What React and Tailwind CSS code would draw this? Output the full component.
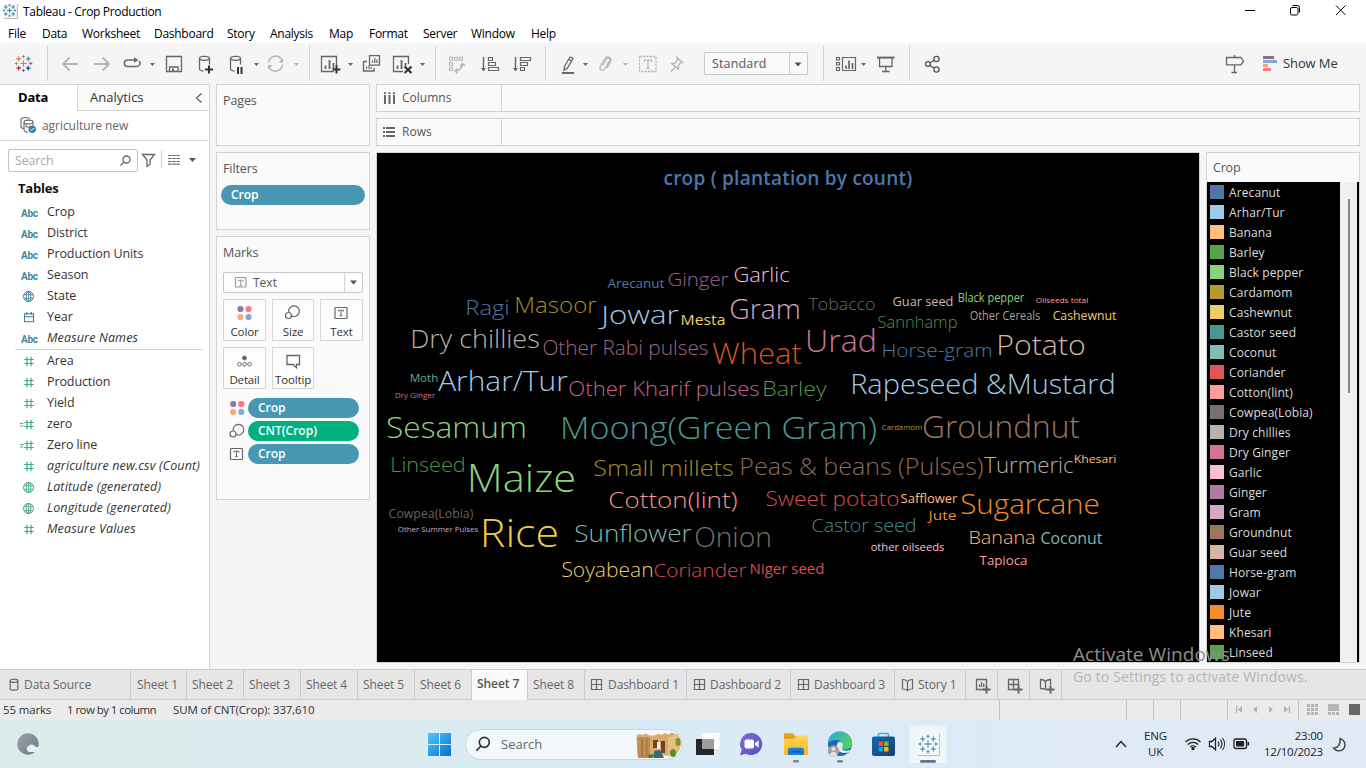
import React from "react";

/* Drawing whose viewBox starts at (x, y), so paths share one coordinate space. */
function I({ x, y, w, h, c = "#666", sw = 1.3, className = "", children }) {
  return (
    <svg
      width={w}
      height={h}
      viewBox={`${x} ${y} ${w} ${h}`}
      fill="none"
      stroke={c}
      strokeWidth={sw}
      className={"shrink-0 " + className}
    >
      {children}
    </svg>
  );
}

const Caret = ({ x, y = 64.5, c = "#666" }) => (
  <path d={`M${x - 2.5} ${y - 1.5}h5l-2.5 3z`} fill={c} stroke="none" />
);

const plus = (x, y, s) => `M${x - s} ${y}h${s * 2}M${x} ${y - s}v${s * 2}`;

function TableauMark({ cx, cy, s = 1, mono, sw = 1.2 }) {
  const col = (c) => (mono ? mono : c);
  return (
    <g transform={`translate(${cx} ${cy}) scale(${s})`} fill="none" strokeWidth={sw}>
      <path d={plus(0, 0, 3.2)} stroke={col("#e8762d")} />
      <path d={plus(-4.8, -4.6, 2.3)} stroke={col("#e8762d")} />
      <path d={plus(4.8, -4.6, 2.3)} stroke={col("#5b879b")} />
      <path d={plus(-4.8, 4.6, 2.3)} stroke={col("#c72035")} />
      <path d={plus(4.8, 4.6, 2.3)} stroke={col("#1f457e")} />
      <path d={plus(0, -7, 1.6)} stroke={col("#7099a5")} strokeWidth={sw * 0.8} />
      <path d={plus(0, 7, 1.6)} stroke={col("#5b6591")} strokeWidth={sw * 0.8} />
      <path d={plus(-7.2, 0, 1.6)} stroke={col("#7099a5")} strokeWidth={sw * 0.8} />
      <path d={plus(7.2, 0, 1.6)} stroke={col("#5b6591")} strokeWidth={sw * 0.8} />
    </g>
  );
}

const TBox = ({ x, y, w = 12, h = 11, c = "#666" }) => (
  <g stroke={c}>
    <rect x={x} y={y} width={w} height={h} rx="0.8" strokeWidth="1.2" />
    <path
      d={`M${x + w / 2 - 2.5} ${y + 4}v-1.2h5v1.2M${x + w / 2} ${y + 3}v5.2m-1.3 0h2.6`}
      strokeWidth="1"
    />
  </g>
);

const Dots = ({ x, y }) => (
  <g stroke="none">
    <circle cx={x} cy={y} r="3.1" fill="#8f78a5" />
    <circle cx={x + 8} cy={y} r="3.1" fill="#fc7885" />
    <circle cx={x} cy={y + 8} r="3.1" fill="#f6a97c" />
    <circle cx={x + 8} cy={y + 8} r="3.1" fill="#87a9ce" />
  </g>
);

const Bubble = ({ x, y }) => (
  <g strokeWidth="1.2">
    <path d={`M${x + 4.3} ${y + 6.6}a5.300 5.300 0 1 1 3 3.900`} />
    <circle cx={x + 4} cy={y + 10} r="3" />
  </g>
);

const Globe = ({ c }) => (
  <g stroke={c} strokeWidth="1">
    <circle cx="28.5" cy="10.5" r="5" />
    <ellipse cx="28.5" cy="10.5" rx="2.3" ry="5" />
    <path d="M24 8.7h9M24 12.3h9M28.5 5.5v10" strokeWidth="0.8" />
  </g>
);

function Field({ kind, label, italic }) {
  const blue = "#3a81a0";
  const green = "#45a884";
  return (
    <div className="flex h-[21px] items-center">
      {kind === "abc" ? (
        <span className="w-[47px] pt-px pl-[21px] font-[Roboto] text-[10px] font-bold tracking-[-0.3px] text-[#3f86a1]">
          Abc
        </span>
      ) : (
        <I x={0} y={0} w={47} h={21} className="">
          {kind === "geo" && <Globe c={blue} />}
          {kind === "ggeo" && <Globe c={green} />}
          {kind === "date" && (
            <path d="M24.5 6.8h9v8h-9zM24.5 9.7h9M26.7 5v3M31.3 5v3" stroke={blue} strokeWidth="1.1" />
          )}
          {(kind === "num" || kind === "calc") && (
            <path d="M24.3 8.5h9.4M24.3 12.5h9.4M27 5.8v9.4M31 5.8v9.4" stroke={green} strokeWidth="1.2" />
          )}
          {kind === "calc" && <path d="M20 9.5h3.3M20 12h3.3" stroke={green} strokeWidth="1" />}
        </I>
      )}
      <span
        className={
          "text-[12.5px] whitespace-nowrap text-[#333] " + (italic ? "italic tracking-[0.150px]" : "tracking-[-0.1px]")
        }
      >
        {label}
      </span>
    </div>
  );
}

const dims = [
  ["abc", "Crop"],
  ["abc", "District"],
  ["abc", "Production Units"],
  ["abc", "Season"],
  ["geo", "State"],
  ["date", "Year"],
  ["abc", "Measure Names", 1],
];
const measures = [
  ["num", "Area"],
  ["num", "Production"],
  ["num", "Yield"],
  ["calc", "zero"],
  ["calc", "Zero line"],
  ["num", "agriculture new.csv (Count)", 1],
  ["ggeo", "Latitude (generated)", 1],
  ["ggeo", "Longitude (generated)", 1],
  ["num", "Measure Values", 1],
];

/* label, left, baseline, width, size, colour */
const words = [
  ["Arecanut", 608, 288, 56, 13, "#4e79a7"],
  ["Ginger", 668, 285.5, 60, 19, "#a0648f"],
  ["Garlic", 734, 281.5, 55, 19.5, "#fabfd2"],
  ["Ragi", 466, 314.5, 43, 21, "#4e79a7"],
  ["Masoor", 515, 312.5, 81, 22, "#a58a2a"],
  ["Jowar", 602, 324, 76, 26, "#a0cbe8"],
  ["Mesta", 681, 325, 44, 15, "#f1ce63"],
  ["Gram", 730, 319, 70, 27.5, "#d4a6c8"],
  ["Tobacco", 809, 310, 66, 17, "#6f6866"],
  ["Guar seed", 893, 306, 60, 13, "#d7b5a6"],
  ["Black pepper", 958, 302.3, 66, 12, "#8cd17d"],
  ["Oilseeds total", 1036, 303, 52, 8, "#ff9d9a"],
  ["Sannhamp", 878, 328, 79, 16.5, "#4f9545"],
  ["Other Cereals", 970, 320, 70, 12, "#a8a09c"],
  ["Cashewnut", 1053, 320, 63, 12.5, "#f1ce63"],
  ["Dry chillies", 411, 348, 128, 25.5, "#bab0ac"],
  ["Other Rabi pulses", 543, 355, 165, 19.5, "#a0648f"],
  ["Wheat", 713, 364, 88, 29, "#d65420"],
  ["Urad", 806, 352, 70, 32, "#d37295"],
  ["Horse-gram", 882, 357, 110, 19, "#4e79a7"],
  ["Potato", 997, 355, 88, 28, "#d7b5a6"],
  ["Moth", 410, 382, 28, 11, "#6fa9a0"],
  ["Dry Ginger", 395, 398, 40, 8, "#d37295"],
  ["Arhar/Tur", 439, 391, 128, 28, "#a0cbe8"],
  ["Other Kharif pulses", 569, 396, 190, 20.5, "#c4658a"],
  ["Barley", 763, 396, 63, 20.5, "#519a48"],
  ["Rapeseed &Mustard", 851, 394, 264, 28, "#a0cbe8"],
  ["Sesamum", 387, 438, 139, 30, "#8cd17d"],
  ["Moong(Green Gram)", 561, 439, 315, 32, "#499894"],
  ["Cardamom", 882, 430, 40, 8, "#b6992d"],
  ["Groundnut", 923, 438, 156, 30.5, "#9d7660"],
  ["Linseed", 391, 472, 74, 21, "#4f9545"],
  ["Maize", 468, 492, 107, 39, "#8cd17d"],
  ["Small millets", 594, 476, 139, 22, "#a58a2a"],
  ["Peas & beans (Pulses)", 740, 475, 243, 23, "#8f6b58"],
  ["Turmeric", 985, 473.3, 88, 21.5, "#bab0ac"],
  ["Khesari", 1074, 463, 42, 11.5, "#ffbe7d"],
  ["Cotton(lint)", 609, 508, 128, 22, "#f49693"],
  ["Sweet potato", 766, 506, 133, 20, "#d94f53"],
  ["Safflower", 901, 503, 56, 12, "#ffbe7d"],
  ["Sugarcane", 961, 514, 138, 28, "#f28e2b"],
  ["Cowpea(Lobia)", 389, 518, 84, 12, "#68615f"],
  ["Other Summer Pulses", 398, 532, 80, 8, "#d4a6c8"],
  ["Rice", 481, 547, 77, 39, "#edc948"],
  ["Sunflower", 575, 542, 116, 23.5, "#7fb8af"],
  ["Onion", 695, 547, 76, 28, "#79706e"],
  ["Castor seed", 812, 532, 104, 18.5, "#44908c"],
  ["Jute", 929, 520, 27, 13.5, "#f28e2b"],
  ["Banana", 969, 544, 66, 18.5, "#ffbe7d"],
  ["Coconut", 1041, 544, 61, 15.5, "#7fb8af"],
  ["other oilseeds", 871, 551, 73, 11.5, "#fabfd2"],
  ["Tapioca", 980, 565, 47, 13, "#ff9d9a"],
  ["Soyabean", 562, 576.5, 91, 20, "#f1ce63"],
  ["Coriander", 654, 577, 92, 19, "#d94f53"],
  ["Niger seed", 750, 574, 74, 15, "#d94f53"],
];

const legend = [
  ["Arecanut", "#4e79a7"],
  ["Arhar/Tur", "#a0cbe8"],
  ["Banana", "#ffbe7d"],
  ["Barley", "#59a14f"],
  ["Black pepper", "#8cd17d"],
  ["Cardamom", "#b6992d"],
  ["Cashewnut", "#f1ce63"],
  ["Castor seed", "#499894"],
  ["Coconut", "#86bcb6"],
  ["Coriander", "#e15759"],
  ["Cotton(lint)", "#ff9d9a"],
  ["Cowpea(Lobia)", "#79706e"],
  ["Dry chillies", "#bab0ac"],
  ["Dry Ginger", "#d37295"],
  ["Garlic", "#fabfd2"],
  ["Ginger", "#b07aa1"],
  ["Gram", "#d4a6c8"],
  ["Groundnut", "#9d7660"],
  ["Guar seed", "#d7b5a6"],
  ["Horse-gram", "#4e79a7"],
  ["Jowar", "#a0cbe8"],
  ["Jute", "#f28e2b"],
  ["Khesari", "#ffbe7d"],
  ["Linseed", "#59a14f"],
];

function Menu() {
  const items = [
    ["File", "w-[34px]"],
    ["Data", "w-[40px]"],
    ["Worksheet", "w-[72px]"],
    ["Dashboard", "w-[73px]"],
    ["Story", "w-[43px]"],
    ["Analysis", "w-[59px]"],
    ["Map", "w-[40px]"],
    ["Format", "w-[54px]"],
    ["Server", "w-[48px]"],
    ["Window", "w-[60px]"],
    ["Help", "w-[40px]"],
  ];
  return (
    <div className="flex h-[19px] items-center bg-white pl-2 text-[12px] tracking-[-0.270px] text-black">
      {items.map(([t, w]) => (
        <span key={t} className={w}>
          {t}
        </span>
      ))}
    </div>
  );
}

function Toolbar() {
  const g = "#b4b4b4";
  const sep = "h-[35px] w-px shrink-0 bg-[#d4d4d4]";
  return (
    <div className="flex h-[41px] items-center bg-[#f5f5f5]">
      <I x={0} y={43} w={47} h={41}>
        <TableauMark cx={23.5} cy={63.5} />
      </I>
      <div className={sep} />
      <I x={48} y={43} w={261} h={41}>
        <path d="M78 64H63M69.500 57.500L63 64l6.500 6.500" stroke={g} strokeWidth="1.8" />
        <path d="M94 64h15M102.500 57.500L109 64l-6.500 6.500" stroke={g} strokeWidth="1.8" />
        <path d="M132 66.500h4.500a3.700 3.300 0 0 0 2.600-5.500M135 60h-8a3.300 3.300 0 0 0 0 6.500h7" strokeWidth="1.4" />
        <path d="M134 57.300l4.500 2.700-4.500 2.700z" fill="#666" stroke="none" />
        <Caret x={152.500} />
        <path d="M166.500 56.500h15v15h-15zM169.500 71v-4h8.500v4" />
        <path d="M172 68.500h2v3h-2z" fill="#666" stroke="none" />
        <path d="M199.500 58.500v10.500c0 1 1.500 1.800 4 2M209.500 58.500v6" />
        <ellipse cx="204.500" cy="58.300" rx="5" ry="2" />
        <path d="M209 65.500v8M205 69.500h8" stroke="#333" strokeWidth="2" />
        <path d="M230.500 58.500v10.500c0 1 1.500 1.800 4 2M240.500 58.500v6" />
        <ellipse cx="235.500" cy="58.300" rx="5" ry="2" />
        <path d="M238 67v7M241.500 67v7" stroke="#333" strokeWidth="2" />
        <Caret x={256.500} />
        <path d="M268.500 62.500a7.300 7.300 0 0 1 13-3.500M282.500 64.500a7.300 7.300 0 0 1-13 3.800" stroke={g} strokeWidth="1.5" />
        <path d="M283 58v4.500h-4.500zM268 69.500V65h4.500z" fill={g} stroke="none" />
        <Caret x={296.500} c={g} />
      </I>
      <div className={sep} />
      <I x={310} y={43} w={125} h={41}>
        <path d="M334 71.500h-12.500v-15h15V66" />
        <path d="M325.500 69v-3.500M329.500 69v-9M333.500 69v-6" strokeWidth="1.800" />
        <path d="M336.500 65.500v8M332.500 69.500h8" stroke="#333" strokeWidth="2" />
        <Caret x={350.500} />
        <path d="M369.500 55.700h10v9.500h-10z" />
        <path d="M372.500 63v-2.500M374.800 63v-5M377 63v-3.500" strokeWidth="1.2" />
        <path d="M367 61.500h-3.500v9.500h10.500v-3" />
        <path d="M366.500 69v-2.500M369 69v-3.500M371.200 69v-2" strokeWidth="1.200" />
        <path d="M403 71.500h-9.500v-15h15V64" />
        <path d="M397.500 69v-3.500M401.500 69v-9M405.500 66v-3" strokeWidth="1.800" />
        <path d="M404.500 66.500l7 6.500M411.500 66.500l-7 6.500" stroke="#333" strokeWidth="2.200" />
        <Caret x={422.500} />
      </I>
      <div className={sep} />
      <I x={436} y={43} w={109} h={41}>
        <path
          d="M449.500 57.300h3v3h-3zM454.500 57.300h3v3h-3zM459.500 57.300h3v3h-3zM449.500 62.500h3v3h-3zM449.500 67.500h3v3h-3z"
          stroke={g}
          strokeWidth="1.1"
        />
        <path d="M455 71c4 0 7.500-3 7.500-7M457.500 68.500L455 71l2.500 2.500M460 66l2.500-2.500 2.500 2.500" stroke={g} strokeWidth="1.400" />
        <path d="M483.500 57v13" strokeWidth="1.400" />
        <path d="M481 68h5l-2.500 3.500z" fill="#666" stroke="none" />
        <path d="M488.500 57.500h4v3h-4zM488.500 62.500h7v3h-7zM488.500 67.500h10v3h-10z" strokeWidth="1.2" />
        <path d="M515.500 57v13" strokeWidth="1.400" />
        <path d="M513 68h5l-2.500 3.500z" fill="#666" stroke="none" />
        <path d="M520.500 57.500h10v3h-10zM520.500 62.500h7v3h-7zM520.500 67.500h4v3h-4z" strokeWidth="1.2" />
      </I>
      <div className={sep} />
      <I x={546} y={43} w={158} h={41}>
        <path d="M564.500 66.500l5.500-9.500 3 1.600-5.500 9.500-3.500 2.200zM568.600 59.500l3 1.600" />
        <path d="M562 73h12" strokeWidth="2" />
        <Caret x={585.500} />
        <path
          d="M602.500 65.500l4-6.500c1.500-2 4.200-.6 3.200 1.600l-5 8.500c-1.800 2.500-5.700.6-4.500-2.600l4.700-8c2.200-3.300 7.500-1 5.800 3l-3.700 6.500"
          stroke={g}
          strokeWidth="1.200"
        />
        <Caret x={625.500} c={g} />
        <path d="M639.500 56.500h16.500v15h-16.500z" stroke={g} strokeDasharray="2.200 1.200" />
        <path d="M644.500 62v-2h7v2M648 60v8.500M646.500 68.500h3" stroke={g} strokeWidth="1.200" />
        <path d="M677 57.500l5.500 5-2.200.7-2 3 .2 3-6.500-5.500 3-.4 2.200-3zM675 67.500l-4 4" stroke={g} strokeWidth="1.400" />
      </I>
      <div className="flex h-[23px] w-[104px] shrink-0 items-center rounded-[2px] border border-[#c8c8c8] bg-[#f9f9f9]">
        <span className="w-[84px] pt-px pl-[7px] text-[12.5px] tracking-[0.15px] text-[#555]">Standard</span>
        <I x={789} y={53} w={18} h={21} c="#d4d4d4" className="-mt-px">
          <path d="M789.500 53v21" />
          <path d="M794.500 62.500h7l-3.500 4z" fill="#555" stroke="none" />
        </I>
      </div>
      <div className="w-[15px]" />
      <div className={sep} />
      <I x={824} y={43} w={85} h={41}>
        <path d="M836.500 57.500h3v2.500h-3zM836.500 62.500h3v2.500h-3zM836.500 67.500h3v3h-3zM842.500 57.500h13v13h-13z" strokeWidth="1.2" />
        <path d="M846 69v-3.500M849 69v-8.500M852.500 69v-6" strokeWidth="1.7" />
        <Caret x={863.500} />
        <path d="M877 57.600h17.500" strokeWidth="2" />
        <path d="M879.500 58v8.500h12.500V58M885.800 66.500v5M882 71.500h7.500" />
      </I>
      <div className={sep} />
      <I x={910} y={43} w={300} h={41} c="#555">
        <circle cx="928" cy="64" r="2.400" />
        <circle cx="936.500" cy="59" r="2.600" />
        <circle cx="936.500" cy="69.500" r="2.600" />
        <path d="M930 63l4.200-2.700M930 65.500l4.200 2.700" />
      </I>
      <I x={1210} y={43} w={73} h={41}>
        <path d="M1226.500 57.500h14.500l2.500 3.700-2.500 3.700h-14.500zM1234.500 55v2.500M1234.500 65v7.500M1231.500 72.500h5.500" />
        <g stroke="none">
          <path d="M1263 56h11v3h-11z" fill="#8a6f9c" />
          <path d="M1263 60h14v3h-14z" fill="#87a9ce" />
          <path d="M1263 64h5v3h-5z" fill="#f6a97c" />
          <path d="M1263 68h8v3h-8z" fill="#fc7885" />
        </g>
      </I>
      <span className="text-[13px] tracking-[-0.1px] whitespace-nowrap text-[#333]">Show Me</span>
    </div>
  );
}

function DataPane() {
  return (
    <div className="flex w-[210px] shrink-0 flex-col border-t border-r border-[#d4d4d4] bg-white">
      <div className="flex h-[26px] shrink-0">
        <div className="w-[77px] pl-[18px] text-[13px] leading-[24px] font-bold tracking-[-0.2px] text-black">
          Data
        </div>
        <div className="flex flex-1 items-center border-b border-l border-[#d4d4d4] bg-[#fafafa] pl-[12px] text-[13px] text-[#333]">
          <span className="flex-1">Analytics</span>
          <I x={194} y={90} w={15} h={14}>
            <path d="M201.500 92.500l-5 4.500 5 4.500" />
          </I>
        </div>
      </div>
      <div className="flex h-[30px] shrink-0 items-center border-b border-[#dcdcdc]">
        <I x={0} y={111} w={42} h={29}>
          <path
            d="M21 119v7.500c0 1 1 1.800 2.500 2M21 119.500c0-2.700 8-2.700 8.500-.3M24 122.500v7c0 1.500 1.500 2.500 4 2.700M33 122.500v3"
            strokeWidth="1.1"
          />
          <ellipse cx="28.500" cy="122" rx="4.500" ry="1.900" strokeWidth="1.100" />
          <path d="M26 127h3.500M26 127v-3" strokeWidth="1" />
          <circle cx="32.200" cy="129.200" r="3.700" fill="#3681a3" stroke="none" />
          <path d="M30.400 129.200l1.400 1.300 2.300-2.500" stroke="#fff" strokeWidth="1" />
        </I>
        <span className="text-[12px] tracking-[-0.050px] text-[#666]">agriculture new</span>
      </div>
      <div className="mt-[8px] flex h-[23px] shrink-0 items-center pl-2">
        <div className="flex h-[23px] w-[130px] items-center rounded-[2px] border border-[#c4c4c4] pl-1.5 text-[12.5px] tracking-[-0.2px] text-[#aaa]">
          <span className="flex-1 pt-px">Search</span>
          <I x={118} y={150} w={18} h={20}>
            <circle cx="125.500" cy="158.500" r="3.500" />
            <path d="M123 161l-3.500 3.500" />
          </I>
        </div>
        <I x={138} y={150} w={71} h={22}>
          <path d="M142.500 154.500h12l-4.500 5.500v4.500l-3 1.800V160z" />
          <path d="M161.500 151v17" stroke="#d4d4d4" />
          <path
            d="M168 155.500h12M168 158.500h12M168 161.500h12M168 164.200h12"
            strokeDasharray="3.500 0.700"
            strokeWidth="1.200"
          />
          <path d="M189 158h7l-3.500 4z" fill="#555" stroke="none" />
        </I>
      </div>
      <div className="mt-[6px] h-[24px] shrink-0 pl-[18px] text-[13px] leading-[20px] font-bold tracking-[-0.2px] text-[#111]">
        Tables
      </div>
      <div className="flex flex-col">
        {dims.map(([k, l, i]) => (
          <Field key={l} kind={k} label={l} italic={i} />
        ))}
        <div className="ml-[15px] h-px w-[188px] bg-[#d4d4d4]" />
        <div className="h-px" />
        {measures.map(([k, l, i]) => (
          <Field key={l} kind={k} label={l} italic={i} />
        ))}
      </div>
    </div>
  );
}

const card = "border border-[#d4d4d4] bg-[#fafafa]";
const heading = "pl-1.5 pt-[7px] text-[12.5px] leading-[18px] text-[#555] tracking-[-0.1px]";
const tile =
  "flex h-[42px] flex-col items-center border border-[#d4d4d4] bg-[#fdfdfd] text-[11.500px] tracking-[-0.15px] leading-[14px] text-[#333] whitespace-nowrap";
const pill = "flex h-[20px] items-center rounded-full pl-[10px] text-[12px] font-semibold tracking-[0px] text-white";

function Shelves() {
  return (
    <div className="flex w-[154px] shrink-0 flex-col gap-[6px]">
      <div className={card + " h-[62px] " + heading}>Pages</div>
      <div className={card + " h-[78px]"}>
        <div className={heading}>Filters</div>
        <div className={pill + " mt-[7px] ml-1 w-[144px] bg-[#4996b2]"}>Crop</div>
      </div>
      <div className={card + " h-[264px]"}>
        <div className={heading}>Marks</div>
        <div className="mt-[10px] ml-1.5 flex h-[21px] w-[140px] items-center rounded-[2px] border border-[#c8c8c8] bg-[#fdfdfd]">
          <I x={224} y={273} w={29} h={19} c="#999">
            <TBox x={235.500} y={277.500} w={10.500} h={9.500} c="#999" />
          </I>
          <span className="w-[91px] pt-px text-[12px] text-[#555]">Text</span>
          <I x={344} y={273} w={18} h={19} c="#d4d4d4">
            <path d="M344.500 273v19" />
            <path d="M350 280.500h7l-3.500 4z" fill="#555" stroke="none" />
          </I>
        </div>
        <div className="mt-[6px] ml-1.5 grid w-[140px] grid-cols-[43px_42px_43px] gap-x-[6px] gap-y-[6px]">
          <div className={tile}>
            <I x={223} y={300} w={41} h={25}>
              <Dots x={239.500} y={309} />
            </I>
            Color
          </div>
          <div className={tile}>
            <I x={273} y={300} w={40} h={25}>
              <Bubble x={284.500} y={305.500} />
            </I>
            Size
          </div>
          <div className={tile}>
            <I x={321} y={300} w={41} h={25}>
              <TBox x={335} y={307.500} />
            </I>
            Text
          </div>
          <div className={tile}>
            <I x={223} y={348} w={41} h={25} sw={1}>
              <circle cx="243.500" cy="358" r="1.900" fill="#666" />
              <circle cx="238.500" cy="364.300" r="1.800" />
              <circle cx="243.500" cy="364.300" r="1.800" />
              <circle cx="248.500" cy="364.300" r="1.800" />
            </I>
            Detail
          </div>
          <div className={tile}>
            <I x={273} y={348} w={40} h={25}>
              <path d="M287 355.500h12.500v9h-3v3.300l-3.300-3.300H287z" />
            </I>
            Tooltip
          </div>
        </div>
        <div className="mt-[9px] flex flex-col gap-[3px]">
          <div className="flex items-center">
            <I x={217} y={398} w={31} h={20}>
              <Dots x={233.200} y={404} />
            </I>
            <div className={pill + " w-[111px] bg-[#4996b2]"}>Crop</div>
          </div>
          <div className="flex items-center">
            <I x={217} y={421} w={31} h={20}>
              <Bubble x={229} y={424} />
            </I>
            <div className={pill + " w-[111px] bg-[#00b180]"}>CNT(Crop)</div>
          </div>
          <div className="flex items-center">
            <I x={217} y={444} w={31} h={20}>
              <TBox x={230.500} y={448.500} />
            </I>
            <div className={pill + " w-[111px] bg-[#4996b2]"}>Crop</div>
          </div>
        </div>
      </div>
    </div>
  );
}

function View() {
  return (
    <div className="flex flex-col">
      <div className="flex w-[984px] flex-col gap-[6px]">
        <div className={card + " flex h-[28px] items-center text-[12px] text-[#555]"}>
          <I x={377} y={84} w={25} h={26} sw={2}>
            <path d="M385 94v9M389.500 94v9M394 94v9M385 91.300v1.800M389.500 91.300v1.800M394 91.300v1.800" />
          </I>
          <span className="w-[99px]">Columns</span>
          <div className="h-full w-px bg-[#d4d4d4]" />
        </div>
        <div className={card + " flex h-[28px] items-center text-[12px] text-[#555]"}>
          <I x={377} y={118} w={25} h={26} sw={1.800}>
            <path d="M386 127h9M386 131h9M386 135h9M383 127h2M383 131h2M383 135h2" />
          </I>
          <span className="w-[99px]">Rows</span>
          <div className="h-full w-px bg-[#d4d4d4]" />
        </div>
      </div>
      <div className="mt-[6px] flex gap-[6px]">
        <div className="flex h-[511px] w-[824px] flex-col border border-[#d4d4d4] bg-black">
          <div className="h-[50px] text-center text-[19px] leading-[50px] font-semibold tracking-[0.230px] text-[#4a79ad]">
            crop ( plantation by count)
          </div>
          <svg width="822" height="459" viewBox="377 203 822 459" className="font-['Open_Sans'] font-light">
            {words.map(([t, x, y, w, s, c]) => (
              <text
                key={t}
                x={x - s * 0.03}
                y={y}
                fontSize={s}
                fill={c}
                fontWeight={s < 16 ? 400 : 350}
                textLength={w + s * 0.06}
                lengthAdjust="spacingAndGlyphs"
              >
                {t}
              </text>
            ))}
          </svg>
        </div>
        <div className="flex h-[511px] w-[154px] flex-col border border-[#d4d4d4] bg-[#fafafa]">
          <div className="h-[29px] shrink-0 pt-px pl-1.5 text-[12.5px] leading-[28px] tracking-[-0.2px] text-[#555]">Crop</div>
          <div className="flex flex-1 overflow-hidden bg-black">
            <div className="flex w-[133px] flex-col">
              {legend.map(([t, c], i) => (
                <div key={i} className="flex h-[20px] shrink-0 items-center">
                  <svg width="22" height="20" viewBox="0 0 22 20" className="shrink-0">
                    <rect x="3" y="3" width="14" height="14" fill={c} />
                  </svg>
                  <span className="pt-px text-[12px] tracking-[0.1px] whitespace-nowrap text-[#dcdcdc]">{t}</span>
                </div>
              ))}
            </div>
            <div className="w-[17px] bg-[#f0f0f0] pt-[17px] pl-[8px]">
              <div className="h-[194px] w-[2px] bg-[#858585]" />
            </div>
          </div>
        </div>
      </div>
    </div>
  );
}

const GridIcon = ({ x = 0, w = 22 }) => (
  <I x={0} y={0} w={w} h={28} sw={1.2}>
    <path d={`M${x + 6.500} 8.500h10v10h-10zM${x + 11.500} 8.500v10M${x + 6.500} 13.500h10`} />
  </I>
);
const BookIcon = () => (
  <I x={0} y={0} w={23} h={28} sw={1.2}>
    <path d="M7.500 8.500c2.500 0 4 .6 5 2 1-1.400 2.500-2 5-2v9.500c-2.500 0-4 .4-5 1.500-1-1.100-2.500-1.500-5-1.500zM12.500 10.500v8.500" />
  </I>
);

function SheetTabs() {
  const tab = "flex h-[30px] shrink-0 items-center border-r border-[#cbcbcb]";
  return (
    <div className="flex h-[31px] shrink-0 border-t border-b border-[#cbcbcb] bg-[#e6e6e6] text-[12px] tracking-[-0.080px] text-[#666]">
      <div className={tab + " w-[131px]"}>
        <I x={0} y={0} w={24} h={28} sw={1.2}>
          <ellipse cx="14" cy="9.700" rx="3.800" ry="1.600" />
          <path d="M10.200 9.700v8c0 2 7.600 2 7.600 0v-8" />
        </I>
        Data Source
      </div>
      <div className={tab + " w-[56px] pl-[6px]"}>Sheet 1</div>
      {["Sheet 2", "Sheet 3", "Sheet 4", "Sheet 5", "Sheet 6"].map((s) => (
        <div key={s} className={tab + " w-[57px] pl-[5px]"}>
          {s}
        </div>
      ))}
      <div className={tab + " w-[56px] bg-[#fafafa] pb-[3px] pl-[5px] font-semibold tracking-[-0.050px] text-[#555]"}>
        Sheet 7
      </div>
      <div className={tab + " w-[57px] pl-[5px]"}>Sheet 8</div>
      <div className={tab + " w-[102px]"}>
        <GridIcon w={23} />
        Dashboard 1
      </div>
      <div className={tab + " w-[104px]"}>
        <GridIcon w={23} x={1} />
        Dashboard 2
      </div>
      <div className={tab + " w-[104px]"}>
        <GridIcon w={23} x={1} />
        Dashboard 3
      </div>
      <div className={tab + " w-[71px]"}>
        <BookIcon />
        Story 1
      </div>
      <div className={tab + " w-[32px]"}>
        <I x={0} y={0} w={31} h={28}>
          <path d="M19 18.500h-8.500v-10h10V15M13.500 16v-2.500M15.500 16v-5M17.700 16v-3.500" />
          <path d="M20.500 14.500v8M16.500 18.500h8" strokeWidth="2" />
        </I>
      </div>
      <div className={tab + " w-[32px]"}>
        <I x={0} y={0} w={31} h={28}>
          <path d="M17 18.500h-6.500v-10h10V15M15.500 8.500v10M10.500 13.500h10" />
          <path d="M20.500 14.500v8M16.500 18.500h8" strokeWidth="2" />
        </I>
      </div>
      <div className={tab + " w-[32px]"}>
        <I x={0} y={0} w={31} h={28}>
          <path d="M16.500 19c-1-1.100-2.500-1.500-6-1.500V8.500c2.500 0 4 .6 5 2 1-1.400 2.500-2 5-2V14M15.500 10.500v8" />
          <path d="M20.500 14.500v8M16.500 18.500h8" strokeWidth="2" />
        </I>
      </div>
    </div>
  );
}

function StatusBar() {
  return (
    <div className="flex h-[20px] shrink-0 items-center bg-[#ebebeb] text-[11.500px] tracking-[-0.15px] whitespace-nowrap text-[#333]">
      <span className="w-[67px] pl-[3px]">55 marks</span>
      <span className="w-[106px] tracking-[-0.560px]">1 row by 1 column</span>
      <span className="w-[817px]">SUM of CNT(Crop): 337,610</span>
      <I x={990} y={700} w={376} h={20} c="#c2c2c2" sw={1}>
        <path d="M999.500 700v20M1126.500 700v20M1153.500 700v20M1180.500 700v20M1227.500 700v20M1298.500 700v20" />
        <g fill="#b4b4b4" stroke="none">
          <path d="M1236 706h1.300v7h-1.300zM1242 706v7l-4.200-3.500zM1257 706v7l-4-3.500zM1269 706v7l4-3.500zM1284 706v7l4.200-3.500zM1288.800 706h1.300v7h-1.300z" />
          <path d="M1307 704h3v3h-3zM1311 704h3v3h-3zM1315 704h3v3h-3zM1307 708h3v3h-3zM1311 708h3v3h-3zM1315 708h3v3h-3zM1307 712h3v3h-3zM1311 712h3v3h-3zM1315 712h3v3h-3z" />
          <path d="M1328 704h11v7h-11zM1328 712h3v3h-3zM1332 712h3v3h-3zM1336 712h3v3h-3z" />
          <path d="M1349 704h11v11h-11z" fill="#666" />
        </g>
      </I>
    </div>
  );
}

function Taskbar() {
  return (
    <div className="flex h-[48px] shrink-0 items-center bg-linear-to-r from-[#dcebea] via-[#d9ebf5] to-[#e2e9f5]">
      <I x={0} y={720} w={465} h={48}>
        <defs>
          <linearGradient id="moon" x1="0" y1="0" x2="1" y2="1">
            <stop offset="0" stopColor="#9aa5b1" />
            <stop offset="1" stopColor="#6d7885" />
          </linearGradient>
          <linearGradient id="win" x1="0" y1="0" x2="1" y2="1">
            <stop offset="0" stopColor="#4cc8f8" />
            <stop offset="1" stopColor="#0a70d0" />
          </linearGradient>
        </defs>
        <circle cx="28" cy="744" r="10.700" fill="url(#moon)" stroke="none" />
        <path d="M29 752a3.400 3.400 0 0 1 .2-6.500 4 4 0 0 1 6.300 1.500 2.600 2.600 0 0 1 1.500 5z" fill="#e9edf2" stroke="none" />
        <path
          d="M428 733h11v11h-11zM440 733h11v11h-11zM428 745h11v11h-11zM440 745h11v11h-11z"
          fill="url(#win)"
          stroke="none"
        />
      </I>
      <div className="flex h-[31px] w-[218px] items-center overflow-hidden rounded-full border border-[#c9d6df] bg-[#f3f8fb]">
        <I x={466} y={729} w={35} h={30} c="#333" sw={1.700}>
          <circle cx="484.300" cy="742.300" r="5" />
          <path d="M481 746l-4.500 4.700" />
        </I>
        <span className="flex-1 pt-px text-[13px] tracking-[0px] text-[#666]">Search</span>
        <I x={634} y={729} w={48} h={30} sw={0}>
          <path d="M636.500 735.500l3-1.500 3 1 3-1.500 4 2h5l3-1.500 4 .5 4-1.500 3 1.500 3-2 5 2v4l4 2c1 8-2 12-6 15h-37z" fill="#d9ab6c" />
          <path d="M637 737h13v21h-12z" fill="#bf8e55" />
          <path d="M641 738h2v19h-2zM646 738h1.500v19H646z" fill="#a87742" />
          <path d="M653 740h5v8h-5zM661 741h4v12h-4z" fill="#6b4524" />
          <path d="M657 742h3v7h-3z" fill="#e6eef2" />
          <path d="M668 737l10-3 4 9-6 12-8 1z" fill="#e8be80" />
          <ellipse cx="678" cy="742" rx="2.500" ry="4" fill="#6f9a33" />
          <ellipse cx="673" cy="753" rx="3" ry="4" fill="#5d8d2c" />
          <ellipse cx="651" cy="756" rx="3" ry="2" fill="#4d8034" />
          <path d="M654 751l6-1 4 8h-10z" fill="#2d6d78" />
        </I>
      </div>
      <I x={683} y={720} w={432} h={48} sw={0}>
        <defs>
          <linearGradient id="chat" x1="0" y1="0" x2="1" y2="1">
            <stop offset="0" stopColor="#8d68cf" />
            <stop offset="1" stopColor="#514fc1" />
          </linearGradient>
          <linearGradient id="edge" x1="0" y1="0" x2="1" y2="0.500">
            <stop offset="0" stopColor="#2ba3e4" />
            <stop offset="1" stopColor="#55cf61" />
          </linearGradient>
          <linearGradient id="fold" x1="0" y1="0" x2="0" y2="1">
            <stop offset="0" stopColor="#ffd55e" />
            <stop offset="1" stopColor="#fcb51c" />
          </linearGradient>
          <linearGradient id="store" x1="0" y1="0" x2="1" y2="1">
            <stop offset="0" stopColor="#0a6cb9" />
            <stop offset="1" stopColor="#1c3c6e" />
          </linearGradient>
        </defs>
        <path d="M702 733h17.500v16h-17.500z" fill="#fbfbfb" />
        <path d="M696 739h18v16h-18z" fill="#262626" />
        <path d="M702 739h12v10h-12z" fill="#9d9d9d" />
        <path d="M751.500 733a11 11 0 1 1-5.500 20.700l-6 1.500 1.700-5.500A11 11 0 0 1 751.500 733z" fill="url(#chat)" />
        <rect x="744.500" y="739.500" width="9.500" height="9" rx="2" fill="#fff" />
        <path d="M755 743l3.700-2.700v7.500L755 745z" fill="#fff" />
        <path d="M784 735a1.500 1.500 0 0 1 1.500-1.500h7l3 3h-11.500z" fill="#e09a14" />
        <rect x="784" y="735.500" width="24" height="19.500" rx="1.800" fill="url(#fold)" />
        <path d="M784 733.500h9l3 3.500-3 2h-9z" fill="#e6a21d" />
        <path d="M788 755v-5a2.300 2.300 0 0 1 2.300-2.300h11.400a2.300 2.300 0 0 1 2.300 2.300v5z" fill="#1a7fd0" />
        <path d="M791.500 751h9v1.500h-9z" fill="#0f5aa3" />
        <circle cx="840" cy="744" r="12" fill="#1567b8" />
        <path d="M828 743a12 12 0 0 1 24 .5c0 4-3 6-7 6-4.500 0-3.500-2-2.800-3.500 1-3-2-6-5.700-6-4 0-7 1.500-8.500 3z" fill="url(#edge)" />
        <path d="M837 744c-1.500 6 3.500 10.500 11 8.500a12 12 0 0 0 3-3c-4 2-9 1.500-9-1.500l1-3c-.5-4-5-4-6-1z" fill="#d9edf6" />
        <circle cx="833.500" cy="751" r="5.700" fill="#a89f98" />
        <circle cx="833.500" cy="749" r="2" fill="#e8e2dc" />
        <path d="M829.800 755a3.800 3.800 0 0 1 7.400 0 5.500 5.500 0 0 1-7.400 0z" fill="#e8e2dc" />
        <path d="M878.500 737v-2.500a1 1 0 0 1 1-1h8a1 1 0 0 1 1 1v2.500" fill="none" stroke="#3fb4ee" strokeWidth="1.600" />
        <rect x="872" y="736.500" width="23" height="19.500" rx="2" fill="url(#store)" />
        <path d="M878.500 741.500h4.500v4.500h-4.500z" fill="#f25022" />
        <path d="M884 741.500h4.500v4.500H884z" fill="#7fba00" />
        <path d="M878.500 747h4.500v4.500h-4.500z" fill="#00a4ef" />
        <path d="M884 747h4.500v4.500H884z" fill="#ffb900" />
        <rect x="909" y="725" width="38" height="38.500" rx="4" fill="#eff6fa" stroke="#dfe9ef" strokeWidth="1" />
        <path d="M918 734h22v22h-22z" fill="#b9bdc0" />
        <path d="M917 733h22v22h-22z" fill="#f5f8fa" />
        <TableauMark cx={928} cy={744} s={1.100} mono="#3a7fa8" sw={1} />
        <rect x="793" y="760" width="6" height="2.500" rx="1.200" fill="#7b858d" />
        <rect x="837" y="760" width="6" height="2.500" rx="1.200" fill="#7b858d" />
        <rect x="920" y="760" width="16" height="2.800" rx="1.400" fill="#5a7386" />
      </I>
      <I x={1115} y={720} w={24} h={48} c="#222" sw={1.400}>
        <path d="M1116 747l5-5.500 5 5.500" />
      </I>
      <div className="w-[33px] text-center text-[11.500px] leading-[16.500px] tracking-[-0.2px] text-[#222]">
        ENG
        <br />
        UK
      </div>
      <I x={1172} y={720} w={90} h={48} c="#222" sw={1.300}>
        <path d="M1185.500 742a10.500 10.500 0 0 1 15 0M1187.800 744.500a7.300 7.300 0 0 1 10.400 0M1190.200 747a4 4 0 0 1 5.600 0" />
        <circle cx="1193" cy="748.500" r="1.100" fill="#222" />
        <path d="M1209.500 741.500h2.500l3.500-3.200v11.400l-3.500-3.200h-2.500z" />
        <path d="M1218 741.500a4 4 0 0 1 0 5M1220.300 739.700a7 7 0 0 1 0 8.600M1222.500 738a10 10 0 0 1 0 12" strokeWidth="1.100" />
        <rect x="1234" y="739" width="12.500" height="9.500" rx="2" />
        <path d="M1236 741h8v5.500h-8z" fill="#222" stroke="none" />
        <path d="M1248.300 742v3.500" strokeWidth="1.600" />
      </I>
      <div className="w-[61px] text-right text-[11.500px] leading-[16.500px] tracking-[-0.2px] whitespace-nowrap text-[#222]">
        23:00
        <br />
        12/10/2023
      </div>
      <I x={1323} y={720} w={43} h={48} c="#333" sw={1.200}>
        <path d="M1340 738.500c5 1.500 6.500 7 3.500 10.500-2.500 2.600-7.500 2.700-10-.8 3.500 0 7.500-3 6.500-9.700z" />
      </I>
    </div>
  );
}

export default function App() {
  return (
    <div className="relative flex h-[768px] w-[1366px] flex-col overflow-hidden bg-[#f5f5f5] font-['Open_Sans',sans-serif]">
      <div className="flex h-[24px] shrink-0 items-center bg-white text-[12px] tracking-[-0.320px] text-black">
        <I x={0} y={0} w={23} h={24} sw={0}>
          <path d="M4 4h14v15H4z" fill="#b9bdc0" />
          <path d="M3 4h14v14H3z" fill="#f2f4f5" />
          <TableauMark cx={9.500} cy={10.500} s={0.760} mono="#2b86b5" sw={1.300} />
        </I>
        <span className="flex-1">Tableau - Crop Production</span>
        <I x={1236} y={0} w={130} h={24} c="#000" sw={1}>
          <path d="M1245 10.500h10" />
          <rect x="1290.500" y="7.500" width="7.500" height="7.500" rx="1.500" />
          <path d="M1292.500 5.500h5a2 2 0 0 1 2 2v5" />
          <path d="M1336 5.500l9.500 9.500M1345.500 5.500L1336 15" />
        </I>
      </div>
      <Menu />
      <Toolbar />
      <div className="flex h-[585px] shrink-0">
        <DataPane />
        <div className="flex gap-[6px] pl-[6px]">
          <Shelves />
          <View />
        </div>
      </div>
      <SheetTabs />
      <StatusBar />
      <Taskbar />
      <div className="pointer-events-none absolute top-[641px] left-[1073px] whitespace-nowrap">
        <div className="text-[19px] leading-[26px] tracking-[0.050px] text-[#8f8f8f]">Activate Windows</div>
        <div className="text-[14px] leading-[20px] tracking-[0.150px] text-[#b5b5b5]">
          Go to Settings to activate Windows.
        </div>
      </div>
    </div>
  );
}
